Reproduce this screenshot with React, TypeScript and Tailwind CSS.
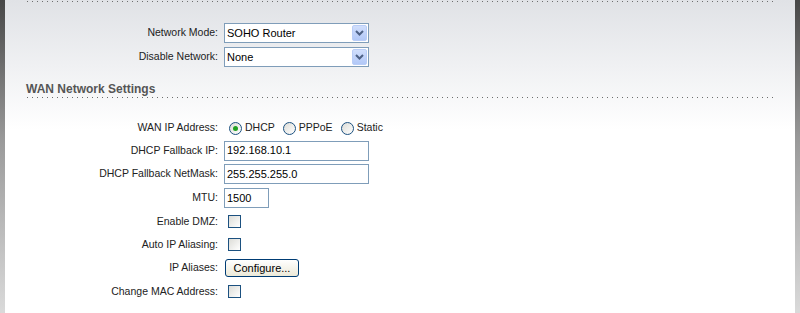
import React from 'react';

const Dots = () => (
  <div className="h-px ml-[22px] w-[747px] bg-[linear-gradient(to_right,#6e6e6e_1px,transparent_1px)] bg-[length:5px_1px]" />
);

const Row = ({ label, h = 'h-[24px]', children }: { label: string; h?: string; children: React.ReactNode }) => (
  <div className={`flex items-center ${h}`}>
    <div className="w-[214px] text-right pr-px text-[10.5px] text-[#222]">{label}</div>
    <div className="pl-[5px] flex items-center">{children}</div>
  </div>
);

const Select = ({ value }: { value: string }) => (
  <div className="w-[145px] h-[20px] border border-[#7f9db9] bg-white flex items-center justify-between pl-[2px] pr-px">
    <span className="text-[11px] text-black">{value}</span>
    <span className="w-[15px] h-[16px] rounded-[2px] bg-[linear-gradient(to_bottom,#d0defc,#b2c8f7)] border border-[#b9cdf7] flex items-center justify-center">
      <svg width="9" height="6" viewBox="0 0 9 6">
        <path d="M1 1 L4.5 4.5 L8 1" fill="none" stroke="#4d6185" strokeWidth="2" />
      </svg>
    </span>
  </div>
);

const TextInput = ({ value, w = 'w-[145px]' }: { value: string; w?: string }) => (
  <div className={`${w} h-[20px] border border-[#7f9db9] bg-white flex items-center pl-[2px] text-[11px] text-black`}>
    {value}
  </div>
);

const Radio = ({ label, checked }: { label: string; checked?: boolean }) => (
  <div className="flex items-center mr-[8px]">
    <span className="w-[13px] h-[13px] rounded-full border border-[#1c5180] bg-[linear-gradient(135deg,#dcdcd7,#ffffff)] flex items-center justify-center">
      {checked && <span className="w-[5px] h-[5px] rounded-full bg-[#21a121]" />}
    </span>
    <span className="ml-[3px] text-[10.5px] text-[#222]">{label}</span>
  </div>
);

const Checkbox = () => (
  <span className="ml-[4px] w-[13px] h-[13px] border border-[#1c5180] bg-[linear-gradient(135deg,#dcdcd7,#ffffff)]" />
);

export default function App() {
  return (
    <div className="w-[800px] h-[313px] flex overflow-hidden font-['Liberation_Sans',Arial,sans-serif]">
      <div className="w-[5px] bg-[linear-gradient(to_bottom,#474747,#9a9a9a_45%,#dadada)]" />
      <div className="flex-1 bg-[linear-gradient(to_bottom,#e0e2e6,#ffffff_130px)]">
        <div className="pt-px">
          <Dots />
        </div>
        <div className="mt-[19px]">
          <Row label="Network Mode:"><Select value="SOHO Router" /></Row>
          <Row label="Disable Network:"><Select value="None" /></Row>
        </div>
        <div className="mt-[13px] ml-[21px] text-[12px] font-bold text-[#555] leading-[14px]">WAN Network Settings</div>
        <div className="mt-[1px]">
          <Dots />
        </div>
        <div className="mt-[19px]">
          <Row label="WAN IP Address:" h="h-[22px]">
            <div className="ml-[5px] flex items-center">
              <Radio label="DHCP" checked />
              <Radio label="PPPoE" />
              <Radio label="Static" />
            </div>
          </Row>
          <Row label="DHCP Fallback IP:" h="h-[23px]"><TextInput value="192.168.10.1" /></Row>
          <Row label="DHCP Fallback NetMask:"><TextInput value="255.255.255.0" /></Row>
          <Row label="MTU:"><TextInput value="1500" w="w-[45px]" /></Row>
          <Row label="Enable DMZ:" h="h-[23px]"><Checkbox /></Row>
          <Row label="Auto IP Aliasing:" h="h-[23px]"><Checkbox /></Row>
          <Row label="IP Aliases:">
            <button className="ml-px w-[74px] h-[18px] rounded-[3px] border border-[#003c74] bg-[linear-gradient(to_bottom,#ffffff,#ece9d8)] text-[11px] text-black leading-none">
              Configure...
            </button>
          </Row>
          <Row label="Change MAC Address:" h="h-[23px]"><Checkbox /></Row>
        </div>
      </div>
      <div className="w-[5px] bg-[linear-gradient(to_bottom,#474747,#9a9a9a_45%,#dadada)]" />
    </div>
  );
}
